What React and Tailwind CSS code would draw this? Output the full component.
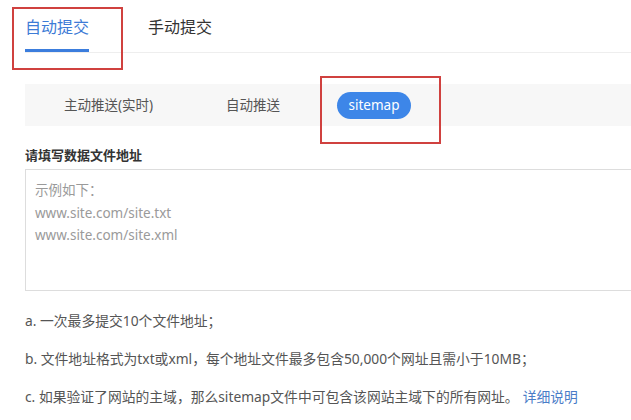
export default function App() {
  return (
    <div
      className="relative w-[631px] h-[420px] overflow-hidden bg-white text-[#333]"
      style={{ fontFamily: '"Noto Sans", "Noto Sans CJK SC", sans-serif' }}
    >
      {/* top tabs */}
      <div className="ml-[25px] flex h-[53px] items-end border-b border-[#eeeeee]">
        <div className="relative flex h-full flex-col justify-end">
          <div className="pb-[11px] text-[16px] leading-[22px] text-[#3d7bd6]">自动提交</div>
          <div className="h-[3px] w-[64px] bg-[#3b7ddd]" />
        </div>
        <div className="ml-[59px] pb-[14px] text-[16px] leading-[22px] text-[#333]">手动提交</div>
      </div>

      {/* sub tabs */}
      <div className="ml-[25px] mt-[31px] flex h-[42px] items-center bg-[#f7f7f7] text-[13.5px] text-[#555]">
        <div className="ml-[39px] w-[94px] whitespace-nowrap">主动推送(实时)</div>
        <div className="ml-[68px] w-[57px] whitespace-nowrap">自动推送</div>
        <div className="ml-[54px] flex h-[27px] w-[74px] items-center justify-center rounded-full bg-[#3d86e8] text-white">
          sitemap
        </div>
      </div>

      {/* label */}
      <div className="ml-[25px] mt-[20px] text-[13px] font-bold leading-[18px] text-[#333]">
        请填写数据文件地址
      </div>

      {/* textarea */}
      <div className="ml-[25px] mt-[5px] h-[122px] border border-r-0 border-[#dddddd] pl-[9px] pt-[9px] text-[13.5px] leading-[22.5px] text-[#9a9a9a]">
        <div>示例如下：</div>
        <div>www.site.com/site.txt</div>
        <div>www.site.com/site.xml</div>
      </div>

      {/* notes */}
      <div className="ml-[25px] mt-[21px] flex flex-col gap-[20px] whitespace-nowrap text-[13.8px] leading-[18px] text-[#555]">
        <div>a. 一次最多提交10个文件地址；</div>
        <div>b. 文件地址格式为txt或xml，每个地址文件最多包含50,000个网址且需小于10MB；</div>
        <div>
          c. 如果验证了网站的主域，那么sitemap文件中可包含该网站主域下的所有网址。
          <span className="ml-[4px] text-[#4a7cc7]">详细说明</span>
        </div>
      </div>

      {/* annotation boxes */}
      <div className="absolute left-[12px] top-[7px] h-[63px] w-[111px] border-[2.5px] border-[#d0413f]" />
      <div className="absolute left-[320px] top-[76px] h-[68px] w-[121px] border-[2.5px] border-[#d0413f]" />
    </div>
  );
}
